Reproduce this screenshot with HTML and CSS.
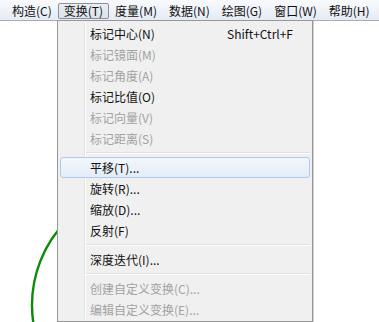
FILE: index.html
```html
<!DOCTYPE html>
<html lang="zh-CN">
<head>
<meta charset="utf-8">
<link rel="stylesheet" href="styles.css">
</head>
<body>
<div class="app">
  <div class="menubar">
    <div class="mitem">构造(C)</div>
    <div class="mitem pressed">变换(T)</div>
    <div class="mitem">度量(M)</div>
    <div class="mitem">数据(N)</div>
    <div class="mitem">绘图(G)</div>
    <div class="mitem">窗口(W)</div>
    <div class="mitem">帮助(H)</div>
  </div>
  <div class="canvas">
    <svg class="drawing" width="379" height="301" viewBox="0 21 379 301">
      <circle cx="152" cy="305" r="120" fill="none" stroke="#0a8a0a" stroke-width="2.4"/>
    </svg>
  </div>
  <div class="dropdown">
    <div class="row"><span>标记中心(N)</span><span class="key">Shift+Ctrl+F</span></div>
    <div class="row off"><span>标记镜面(M)</span></div>
    <div class="row off"><span>标记角度(A)</span></div>
    <div class="row"><span>标记比值(O)</span></div>
    <div class="row off"><span>标记向量(V)</span></div>
    <div class="row off"><span>标记距离(S)</span></div>
    <div class="sep"></div>
    <div class="row hot"><span>平移(T)...</span></div>
    <div class="row"><span>旋转(R)...</span></div>
    <div class="row"><span>缩放(D)...</span></div>
    <div class="row"><span>反射(F)</span></div>
    <div class="sep"></div>
    <div class="row"><span>深度迭代(I)...</span></div>
    <div class="sep"></div>
    <div class="row off"><span>创建自定义变换(C)...</span></div>
    <div class="row off"><span>编辑自定义变换(E)...</span></div>
  </div>
</div>
</body>
</html>
```
FILE: styles.css
```css
html, body {
  margin: 0;
  padding: 0;
  background: #fff;
}
.app {
  position: relative;
  width: 379px;
  height: 322px;
  overflow: hidden;
  font-family: "Noto Sans CJK SC", "Noto Sans", sans-serif;
  font-size: 12px;
  color: #111;
}
.menubar {
  display: flex;
  height: 20px;
  padding-left: 6px;
  background: linear-gradient(#f8fafd, #e5ebf4);
  border-bottom: 1px solid #a9adb3;
  box-sizing: content-box;
}
.mitem {
  margin-top: 3px;
  height: 14px;
  line-height: 14px;
  padding: 0 5px;
  border: 1px solid transparent;
  border-radius: 2px;
  white-space: nowrap;
}
.mitem.pressed {
  border-color: #8d9096;
  background: linear-gradient(#e9edf3, #dce3ec);
}
.canvas {
  height: 301px;
  background: #fff;
}
.drawing {
  display: block;
}
.dropdown {
  position: absolute;
  left: 57px;
  top: 20px;
  width: 250px;
  height: 296px;
  padding: 2px;
  background: #f0f0f0;
  border: 1px solid #979797;
  box-shadow: 1px 1px 0 rgba(0, 0, 0, 0.18);
}
.dropdown::before {
  content: "";
  position: absolute;
  left: 26px;
  top: 2px;
  bottom: 2px;
  width: 0;
  border-left: 1px solid #e2e3e3;
  border-right: 1px solid #ffffff;
}
.row {
  position: relative;
  display: flex;
  align-items: center;
  height: 19px;
  padding-left: 29px;
  padding-right: 16px;
  border: 1px solid transparent;
  border-radius: 3px;
  white-space: nowrap;
}
.row.off {
  color: #a2a2a2;
}
.row.hot {
  border-color: #afcbeb;
  background: linear-gradient(#f3f7fc, #e3ecf7);
}
.key {
  margin-left: auto;
}
.sep {
  height: 8px;
  margin-left: 26px;
  display: flex;
  flex-direction: column;
  justify-content: center;
}
.sep::before {
  content: "";
  display: block;
  height: 0;
  border-top: 1px solid #e0e0e0;
  border-bottom: 1px solid #ffffff;
}
```
